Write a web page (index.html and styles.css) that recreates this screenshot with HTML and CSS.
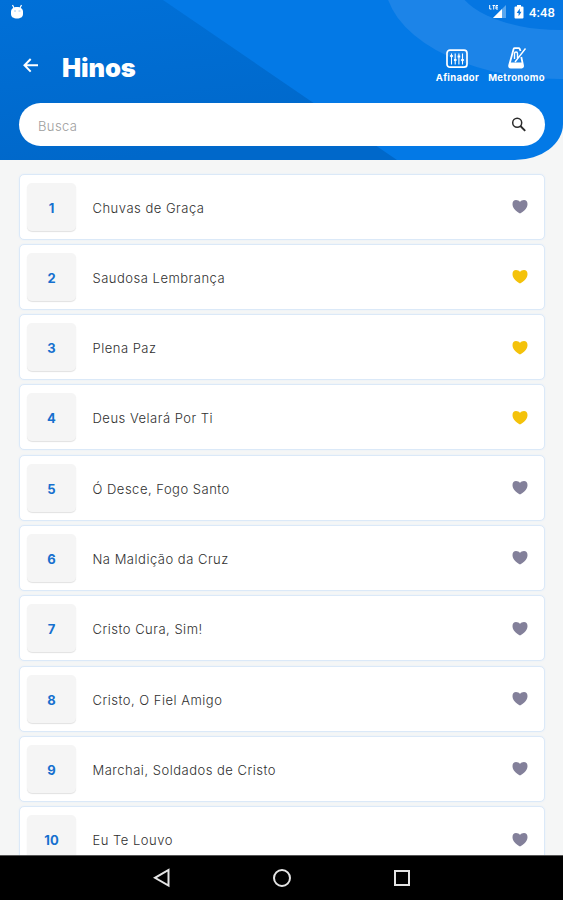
FILE: index.html
```html
<!DOCTYPE html>
<html lang="pt-BR">
<head>
<meta charset="utf-8">
<title>Hinos</title>
<link rel="stylesheet" href="styles.css">
</head>
<body>
<div class="screen">
  <header class="header">
    <svg class="header-art" viewBox="0 0 563 160" aria-hidden="true">
      <defs><linearGradient id="shade" x1="0" y1="0" x2="0.3" y2="1"><stop offset="0" stop-color="#0070d8"/><stop offset="1" stop-color="#0068ca"/></linearGradient></defs>
      <path d="M0 0H163L397 160H0Z" fill="url(#shade)"/>
      <ellipse cx="560" cy="-20" rx="175.5" ry="99" fill="#1c84e8"/>
      <ellipse cx="560" cy="-20" rx="104" ry="50" fill="#0576e2"/>
    </svg>
    <div class="status">
      <svg class="droid" width="14" height="16" viewBox="0 0 14 16"><path d="M2.500 1 4 4M11.500 1 10 4" stroke="#fff" stroke-width="1.200"/><path d="M1 8C1 4.500 3.500 3 7 3S13 4.500 13 8V10C13 13 10.500 14.500 7 14.500S1 13 1 10Z" fill="#fff"/><path d="M4 7H6M8.500 7H10.500" stroke="#9cc8f2"/></svg>
      <div class="status-right">
        <svg width="18" height="16" viewBox="0 0 18 16"><path d="M17 1V14H4Z" fill="#5ba7ee"/><path d="M13 5V14H4Z" fill="#fff"/><path d="M.7 1V5H2.500M3.500 1.500H6M4.700 1.500V5.500M9 1.500H7V5H9M7 3.200H9" fill="none" stroke="#fff"/></svg>
        <svg class="battery" width="10" height="16" viewBox="0 0 10 16"><path d="M3 1H7V2.500H8.500Q9.500 2.500 9.500 3.500V13.500Q9.500 14.500 8.500 14.500H1.500Q.5 14.500 .5 13.500V3.500Q.5 2.500 1.500 2.500H3Z" fill="#fff"/><path d="M5.800 4.500 2.700 9H4.600V12.300L7.500 7.800H5.800Z" fill="#0875df"/></svg>
        <span class="clock">4:48</span>
      </div>
    </div>
    <div class="titlebar">
      <svg class="back" width="16" height="15" viewBox="0 0 16 15"><path d="M7.700 1 1.500 7.300 7.700 13.600M1.500 7.300H15" fill="none" stroke="#fff" stroke-width="2"/></svg>
      <h1>Hinos</h1>
      <nav class="tools">
        <a class="tool"><svg width="22" height="20" viewBox="0 0 22 20"><rect x="1" y="1.200" width="20" height="17" rx="3" fill="none" stroke="#fff" stroke-width="1.700"/><path d="M5.500 4.500V15.500M9.200 4.500V15.500M12.900 4.500V15.500M16.500 4.500V15.500" stroke="#fff" stroke-width="1.100"/><path d="M4.200 7H6.800M7.900 11H10.500M11.600 7.500H14.200M15.200 11H17.800" stroke="#fff" stroke-width="2"/></svg><span>Afinador</span></a>
        <a class="tool metronome"><svg width="20" height="22" viewBox="0 0 20 22"><path d="M13.500 4 12.700 1.900Q12.400 1.200 11.600 1.200H7.700Q6.900 1.200 6.600 2L2.200 18.200Q1.800 20.500 3.700 20.500H14.700Q16.500 20.500 16 18.200L14.300 10" fill="none" stroke="#fff" stroke-width="1.800"/><path d="M3 15.500H15.300L16 20.500H2Z" fill="#fff"/><path d="M8 15 18.500 1.500M7.500 12V6.500Q7.500 5 9 5T10.500 6.500V11" fill="none" stroke="#fff" stroke-width="1.400"/></svg><span>Metronomo</span></a>
      </nav>
    </div>
    <div class="search">
      <span>Busca</span>
      <svg width="16" height="16" viewBox="0 0 16 16" fill="none" stroke="#2b2b2b"><circle cx="6.200" cy="5.800" r="4.500" stroke-width="1.500"/><path d="M9.400 9 14.200 13.800" stroke-width="1.900"/></svg>
    </div>
  </header>

  <svg class="defs" width="0" height="0"><symbol id="heart" viewBox="0 0 16 15"><path d="M8 14.400C6.500 13.700 4 12.300 2.300 10 1 8.400.5 6.800.5 5 .5 2.600 1.900 1 4 1 5.700 1 7.100 1.700 8 2.900 8.900 1.700 10.300 1 12 1 14.100 1 15.500 2.600 15.500 5 15.500 6.800 15 8.400 13.700 10 12 12.300 9.500 13.700 8 14.400Z"/></symbol></svg>

  <main class="list">
    <article class="card"><b>1</b><span>Chuvas de Graça</span><svg class="heart"><use href="#heart"/></svg></article>
    <article class="card"><b>2</b><span>Saudosa Lembrança</span><svg class="heart fav"><use href="#heart"/></svg></article>
    <article class="card"><b>3</b><span>Plena Paz</span><svg class="heart fav"><use href="#heart"/></svg></article>
    <article class="card"><b>4</b><span>Deus Velará Por Ti</span><svg class="heart fav"><use href="#heart"/></svg></article>
    <article class="card"><b>5</b><span>Ó Desce, Fogo Santo</span><svg class="heart"><use href="#heart"/></svg></article>
    <article class="card"><b>6</b><span>Na Maldição da Cruz</span><svg class="heart"><use href="#heart"/></svg></article>
    <article class="card"><b>7</b><span>Cristo Cura, Sim!</span><svg class="heart"><use href="#heart"/></svg></article>
    <article class="card"><b>8</b><span>Cristo, O Fiel Amigo</span><svg class="heart"><use href="#heart"/></svg></article>
    <article class="card"><b>9</b><span>Marchai, Soldados de Cristo</span><svg class="heart"><use href="#heart"/></svg></article>
    <article class="card"><b>10</b><span>Eu Te Louvo</span><svg class="heart"><use href="#heart"/></svg></article>
  </main>

  <footer class="navbar">
    <svg width="18" height="20" viewBox="0 0 18 20"><path d="M15.500 2V17.500L2 9.800Z"/></svg>
    <svg width="20" height="20" viewBox="0 0 20 20"><circle cx="10" cy="10" r="8"/></svg>
    <svg width="18" height="20" viewBox="0 0 18 20"><rect x="2" y="3" width="14" height="14"/></svg>
  </footer>
</div>
</body>
</html>
```
FILE: styles.css
```css
* { box-sizing: border-box; }
body { margin: 0; background: #f5f6f6; font-family: Inter, "Liberation Sans", sans-serif; }
svg { display: block; flex: none; }
.screen { height: 900px; display: flex; flex-direction: column; overflow: hidden; }

.header { position: relative; flex: none; height: 160px; background: #0379e6; border-bottom-right-radius: 48px 36px; overflow: hidden; color: #fff; }
.header-art { position: absolute; top: 0; left: 0; width: 563px; height: 160px; }
.status, .titlebar, .search { position: relative; display: flex; }
.status { height: 24px; padding: 4px 8px 0 10px; justify-content: space-between; }
.status-right { display: flex; }
.battery { margin: 0 5px 0 7px; }
.clock { font: 500 13px/17px Roboto, sans-serif; letter-spacing: .1px; }
.titlebar { height: 79px; padding: 0 18px 0 23px; }
.back { margin-top: 34px; }
h1 { margin: 28px 0 0 23px; font-size: 25.500px; line-height: 32px; font-weight: 900; letter-spacing: -.1px; }
.tools { display: flex; gap: 9px; margin-left: auto; padding-top: 25px; }
.tool { display: flex; flex-direction: column; align-items: center; font-size: 9.500px; font-weight: 700; line-height: 12px; letter-spacing: .35px; white-space: nowrap; }
.tool span { margin-top: 3px; }
.metronome svg { margin-top: -2px; }
.metronome span { margin-top: 3px; }
.search { height: 43px; margin: 0 18px 0 19px; padding: 0 18px 0 19px; border-radius: 22px; background: #fff; align-items: center; justify-content: space-between; color: #9d9d9d; font-size: 13px; font-weight: 300; letter-spacing: .4px; }
.search span { padding-top: 2px; }

.defs { position: absolute; }
.list { flex: 1; min-height: 0; overflow: hidden; padding: 13.500px 18px 0 19px; display: flex; flex-direction: column; gap: 4.300px; }
.card { flex: none; height: 66px; display: flex; align-items: center; padding: 0 16px 0 7px; border: 1.500px solid #dbe9f8; border-radius: 5px; background: #fff; box-shadow: 0 0 2px #e4eef9; }
.card b { width: 49px; height: 48px; border-radius: 5px; background: #f5f5f5; box-shadow: 0 1px 1px #e2e2e2; color: #1670cf; font-size: 13px; font-weight: 700; line-height: 50px; text-align: center; }
.card span { flex: 1; margin-left: 16.500px; padding-top: 2px; color: #303030; font-size: 13px; font-weight: 300; line-height: 18px; letter-spacing: .5px; }
.heart { width: 16px; height: 15px; fill: #83809a; }
.fav { fill: #f4c20a; }

.navbar { flex: none; height: 45px; padding-bottom: 1px; background: #000; display: flex; align-items: center; justify-content: center; gap: 101px; border-top: 1px solid #555; }
.navbar svg { fill: none; stroke: #e4e4e4; stroke-width: 2; }
```
